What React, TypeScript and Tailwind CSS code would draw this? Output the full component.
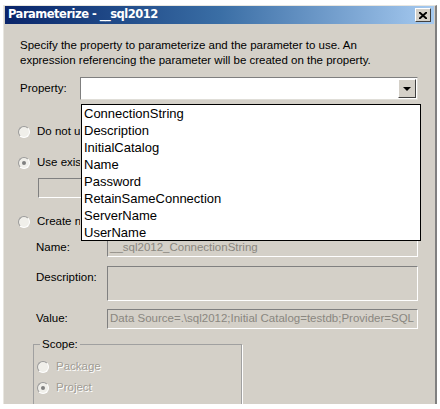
import { ReactNode } from "react";

// Classic Win2000-style "Parameterize" dialog with the Property combo dropped open.

const props = [
  "ConnectionString",
  "Description",
  "InitialCatalog",
  "Name",
  "Password",
  "RetainSameConnection",
  "ServerName",
  "UserName",
];

const font = "font-['Liberation_Sans',Arial,sans-serif]";

export default function App() {
  return (
    <div className={`w-[440px] h-[409px] bg-white overflow-hidden relative ${font}`}>
      <div className="ml-[3px] mt-[5px] w-[434px] h-[399px] overflow-hidden bg-[#d4d0c8] border-l border-t border-[#e8e6e0] border-r-2 border-r-[#808080] relative">
        <TitleBar />
        <div className="pl-[16px] pr-[17px] pt-[14px] text-[11.5px] text-black">
          <p className="leading-[15px]">
            Specify the property to parameterize and the parameter to use. An
            <br />
            expression referencing the parameter will be created on the property.
          </p>

          <div className="mt-[9px] h-[23px] flex items-center">
            <span className="w-[60px]">Property:</span>
            <div className="flex-1 h-[23px] bg-white border border-[#7f7f7f] border-r-[#e0ded8] border-b-[#e0ded8] flex justify-end items-center pr-[1px]">
              <div className="w-[18px] h-[19px] bg-[#d4d0c8] border border-t-white border-l-white border-r-[#404040] border-b-[#404040] flex items-center justify-center">
                <div className="w-0 h-0 border-l-[4px] border-r-[4px] border-t-[4px] border-l-transparent border-r-transparent border-t-black" />
              </div>
            </div>
          </div>

          {/* labels are clipped where the open list covers them */}
          <Radio className="mt-[24px]" label="Do not use parameter" clip />
          <Radio className="mt-[15px]" label="Use existing parameter" checked clip />
          <div className="mt-[7px] ml-[18px] h-[20px] border border-t-[#808080] border-l-[#808080] border-r-white border-b-white bg-[#d4d0c8]" />
          <Radio className="mt-[16px]" label="Create new parameter" clip />

          <Field className="mt-[8px]" label="Name:" h="h-[19px]">
            __sql2012_ConnectionString
          </Field>
          <Field className="mt-[9px]" label="Description:" h="h-[35px]" top />
          <Field className="mt-[8px]" label="Value:" h="h-[20px]">
            Data Source=.\sql2012;Initial Catalog=testdb;Provider=SQL
          </Field>

          <div className="mt-[15px] ml-[13px] w-[209px] h-[80px] border border-[#a0a0a0] shadow-[1px_1px_0_#fff] relative pt-[14px] pl-[5px]">
            <span className="absolute -top-[8px] left-[6px] px-[2px] bg-[#d4d0c8] leading-[14px]">Scope:</span>
            <Radio label="Package" disabled />
            <Radio className="mt-[5px]" label="Project" disabled checked />
          </div>
        </div>

        {/* dropped-down list of the Property combo */}
        <ul className="absolute left-[77px] top-[98px] w-[340px] h-[137px] bg-white border border-black text-[13px] leading-[17px] pl-[2px]">
          {props.map((p) => (
            <li key={p} className="h-[17px]">{p}</li>
          ))}
        </ul>
      </div>
    </div>
  );
}

function TitleBar() {
  return (
    <div className="h-[18px] mx-[1px] bg-gradient-to-r from-[#0a246a] via-[#3a6ea5] to-[#a6caf0] flex items-center justify-between pl-[3px] pr-[3px]">
      <span className="text-white font-bold text-[11.5px] leading-none font-['DejaVu_Sans',sans-serif] tracking-[-0.5px]">
        Parameterize - __sql2012
      </span>
      <div className="w-[16px] h-[14px] bg-[#d4d0c8] border border-t-white border-l-white border-r-[#404040] border-b-[#404040] flex items-center justify-center">
        <svg width="8" height="7" viewBox="0 0 8 7">
          <path d="M0 0 L8 7 M8 0 L0 7" stroke="#000" strokeWidth="2" />
        </svg>
      </div>
    </div>
  );
}

function Radio({
  label,
  checked,
  disabled,
  clip,
  className = "",
}: {
  label: string;
  checked?: boolean;
  disabled?: boolean;
  clip?: boolean;
  className?: string;
}) {
  return (
    <div className={`h-[16px] flex items-center gap-[7px] ${className}`}>
      <span className="w-[12px] h-[12px] shrink-0 rounded-full bg-[#f0efea] border border-t-[#9a9a9a] border-l-[#9a9a9a] border-r-white border-b-white flex items-center justify-center -ml-[2px]">
        {checked && <span className="w-[4px] h-[4px] rounded-full bg-[#808080]" />}
      </span>
      <span
        className={`${clip ? "w-[43px] overflow-hidden whitespace-nowrap" : ""} ${
          disabled ? "text-[#a09c94] [text-shadow:1px_1px_0_#fff]" : "text-black"
        }`}
      >
        {label}
      </span>
    </div>
  );
}

function Field({
  label,
  h,
  top,
  children,
  className = "",
}: {
  label: string;
  h: string;
  top?: boolean;
  children?: ReactNode;
  className?: string;
}) {
  return (
    <div className={`flex ${top ? "items-start" : "items-center"} ${className}`}>
      <span className={`w-[87px] shrink-0 pl-[16px] ${top ? "pt-[3px]" : ""}`}>{label}</span>
      <div className={`flex-1 min-w-0 ${h} border border-t-[#808080] border-l-[#808080] border-r-white border-b-white bg-[#d4d0c8] overflow-hidden whitespace-nowrap text-[#8a8780] pl-[2px] flex items-center`}>
        {children}
      </div>
    </div>
  );
}
